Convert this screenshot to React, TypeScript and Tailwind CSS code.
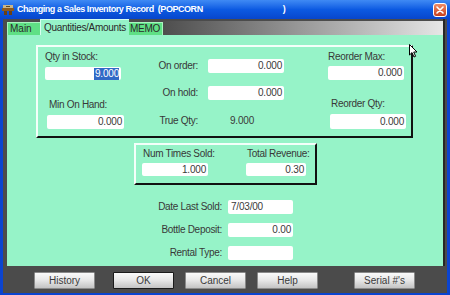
import React from 'react';

const LABEL = 'text-[10px] leading-[12px] tracking-[-0.3px] text-[#383838] whitespace-nowrap';

function Box({
  className = '',
  value = '',
  left = false,
  selected = false,
}: {
  className?: string;
  value?: string;
  left?: boolean;
  selected?: boolean;
}) {
  return (
    <div
      className={`flex items-center rounded-[2px] bg-white text-[10px] leading-[12px] tracking-[-0.2px] text-[#3a3a3a] ${
        left ? 'justify-start pl-[3px]' : 'justify-end pr-[2px]'
      } ${className}`}
    >
      {selected ? <span className="bg-[#3169c6] pl-[1px] text-white">{value}</span> : value}
    </div>
  );
}

function WinButton({ label, isDefault = false, className = '' }: { label: string; isDefault?: boolean; className?: string }) {
  return (
    <button
      type="button"
      className={`flex h-[17px] w-[61px] items-center justify-center rounded-[1px] border bg-gradient-to-b from-[#fafafa] via-[#e6e6e6] to-[#c4c4c4] text-[10px] leading-none text-[#3a3a3a] ${
        isDefault ? 'border-[#1a1a1a]' : 'border-[#8a8a8a]'
      } ${className}`}
    >
      {label}
    </button>
  );
}

function TitleIcon() {
  return (
    <svg width="12" height="10" viewBox="0 0 12 10" className="shrink-0">
      <rect x="1" y="0" width="10" height="3" fill="#c9b68a" />
      <rect x="0" y="3" width="12" height="3" fill="#8a5a20" />
      <rect x="2" y="6" width="3" height="4" fill="#6b4012" />
      <rect x="7" y="6" width="3" height="4" fill="#6b4012" />
      <rect x="4" y="1" width="4" height="1" fill="#5a4a2a" />
    </svg>
  );
}

function CloseButton() {
  return (
    <div className="flex h-[14px] w-[14px] items-center justify-center rounded-[3px] border border-white bg-gradient-to-b from-[#ee8a66] to-[#c73f1c]">
      <svg width="8" height="8" viewBox="0 0 8 8">
        <path d="M1 1 L7 7 M7 1 L1 7" stroke="#fff" strokeWidth="1.6" strokeLinecap="round" />
      </svg>
    </div>
  );
}

function Cursor() {
  return (
    <svg width="9" height="14" viewBox="0 0 9 14" className="absolute left-[409px] top-[44px]">
      <path d="M0.5 0.5 L0.5 11 L3 8.6 L5 13 L6.6 12.3 L4.7 8 L8 8 Z" fill="#fff" stroke="#000" strokeWidth="1" />
    </svg>
  );
}

export default function App() {
  return (
    <div className="relative flex h-[295px] w-[450px] select-none flex-col overflow-hidden bg-[#0b44cf] font-['Liberation_Sans',Arial,sans-serif]">
      {/* title bar */}
      <div className="flex h-[19px] shrink-0 items-center bg-gradient-to-b from-[#3f8af4] via-[#0c5ae2] to-[#0846cc] pl-[2px] pr-[3px]">
        <TitleIcon />
        <span className="ml-[3px] whitespace-pre text-[9px] font-bold leading-none tracking-[-0.45px] text-white">
          Changing a Sales Inventory Record  (POPCORN
        </span>
        <span className="ml-[80px] text-[9px] font-bold leading-none text-white">)</span>
        <div className="ml-auto">
          <CloseButton />
        </div>
      </div>

      <div className="mx-[3px] mb-[2px] flex flex-1 flex-col bg-[#4b4b4b]">
        {/* tabs */}
        <div className="flex h-[16px] shrink-0 items-end">
          <div className="ml-[4px] flex h-[13px] w-[33px] items-center border-l border-t border-[#a8f5bf] bg-[#5fe085] pl-[2px] text-[10px] leading-none text-[#2a2a2a]">
            Main
          </div>
          <div className="flex h-[16px] w-[89px] items-center justify-center border-l border-t border-[#d8fff0] bg-[#96f3c8] text-[10px] leading-none tracking-[-0.3px] text-[#2a2a2a]">
            Quantities/Amounts
          </div>
          <div className="flex h-[13px] w-[34px] items-center border-r border-t border-[#a8f5bf] bg-[#5fe085] pl-[1px] text-[10px] leading-none tracking-[-0.3px] text-[#2a2a2a]">
            MEMO
          </div>
          <div className="h-[14px] flex-1 bg-gradient-to-r from-[#4e4e4e] via-[#9a9a9a] to-[#e6e6e6]" />
          <div className="h-[16px] w-[2px] bg-[#262626]" />
          <div className="w-[2px]" />
        </div>

        {/* panel */}
        <div className="ml-[4px] flex h-[231px] w-[438px] shrink-0 flex-col border-r-2 border-[#262626] bg-[#96f3c8]">
          {/* group 1 */}
          <div className="ml-[29px] mt-[10px] flex h-[93px] w-[377px] border-2 border-b-[#111] border-l-[#f4fffa] border-r-[#111] border-t-[#f4fffa]">
            <div className="ml-[7px] flex w-[80px] flex-col pt-[4px]">
              <div className={LABEL}>Qty in Stock:</div>
              <Box className="mt-[4px] h-[13px] w-[76px]" value="9.000" selected />
              <div className={`${LABEL} ml-[4px] mt-[19px]`}>Min On Hand:</div>
              <Box className="ml-[2px] mt-[4px] h-[14px] w-[77px]" value="0.000" />
            </div>
            <div className="ml-[25px] flex flex-col pt-[12px]">
              <div className="flex h-[14px] items-center">
                <div className={`${LABEL} w-[48px] text-right`}>On order:</div>
                <Box className="ml-[10px] h-[14px] w-[76px]" value="0.000" />
              </div>
              <div className="mt-[13px] flex h-[14px] items-center">
                <div className={`${LABEL} w-[48px] text-right`}>On hold:</div>
                <Box className="ml-[10px] h-[14px] w-[76px]" value="0.000" />
              </div>
              <div className="mt-[14px] flex h-[14px] items-center">
                <div className={`${LABEL} w-[48px] text-right`}>True Qty:</div>
                <div className="ml-[32px] text-[10px] leading-[12px] tracking-[-0.2px] text-[#3a3a3a]">9.000</div>
              </div>
            </div>
            <div className="ml-[44px] flex flex-col pt-[4px]">
              <div className={LABEL}>Reorder Max:</div>
              <Box className="mt-[3px] h-[14px] w-[76px]" value="0.000" />
              <div className={`${LABEL} ml-[3px] mt-[18px]`}>Reorder Qty:</div>
              <Box className="ml-[2px] mt-[4px] h-[15px] w-[76px]" value="0.000" />
            </div>
          </div>

          {/* group 2 */}
          <div className="ml-[127px] mt-[5px] flex h-[42px] w-[183px] border-2 border-b-[#111] border-l-[#f4fffa] border-r-[#111] border-t-[#f4fffa]">
            <div className="ml-[6px] flex w-[72px] flex-col pt-[3px]">
              <div className={`${LABEL} ml-[1px]`}>Num Times Sold:</div>
              <Box className="mt-[3px] h-[13px] w-[66px]" value="1.000" />
            </div>
            <div className="ml-[32px] flex flex-col pt-[3px]">
              <div className={`${LABEL} ml-[1px]`}>Total Revenue:</div>
              <Box className="mt-[3px] h-[13px] w-[60px]" value="0.30" />
            </div>
          </div>

          {/* single fields */}
          <div className="ml-[133px] mt-[15px] flex flex-col gap-[9px]">
            <div className="flex h-[14px] items-center">
              <div className={`${LABEL} w-[82px] text-right`}>Date Last Sold:</div>
              <Box className="ml-[6px] h-[14px] w-[65px]" value="7/03/00" left />
            </div>
            <div className="flex h-[14px] items-center">
              <div className={`${LABEL} w-[82px] text-right`}>Bottle Deposit:</div>
              <Box className="ml-[6px] h-[14px] w-[65px]" value="0.00" />
            </div>
            <div className="flex h-[14px] items-center">
              <div className={`${LABEL} w-[82px] text-right`}>Rental Type:</div>
              <Box className="ml-[6px] h-[14px] w-[65px]" />
            </div>
          </div>
        </div>

        {/* buttons */}
        <div className="flex h-[27px] items-start pt-[6px]">
          <WinButton label="History" className="ml-[31px]" />
          <WinButton label="OK" isDefault className="ml-[18px]" />
          <WinButton label="Cancel" className="ml-[11px]" />
          <WinButton label="Help" className="ml-[11px]" />
          <WinButton label="Serial #'s" className="ml-[36px]" />
        </div>
      </div>

      <Cursor />
    </div>
  );
}
